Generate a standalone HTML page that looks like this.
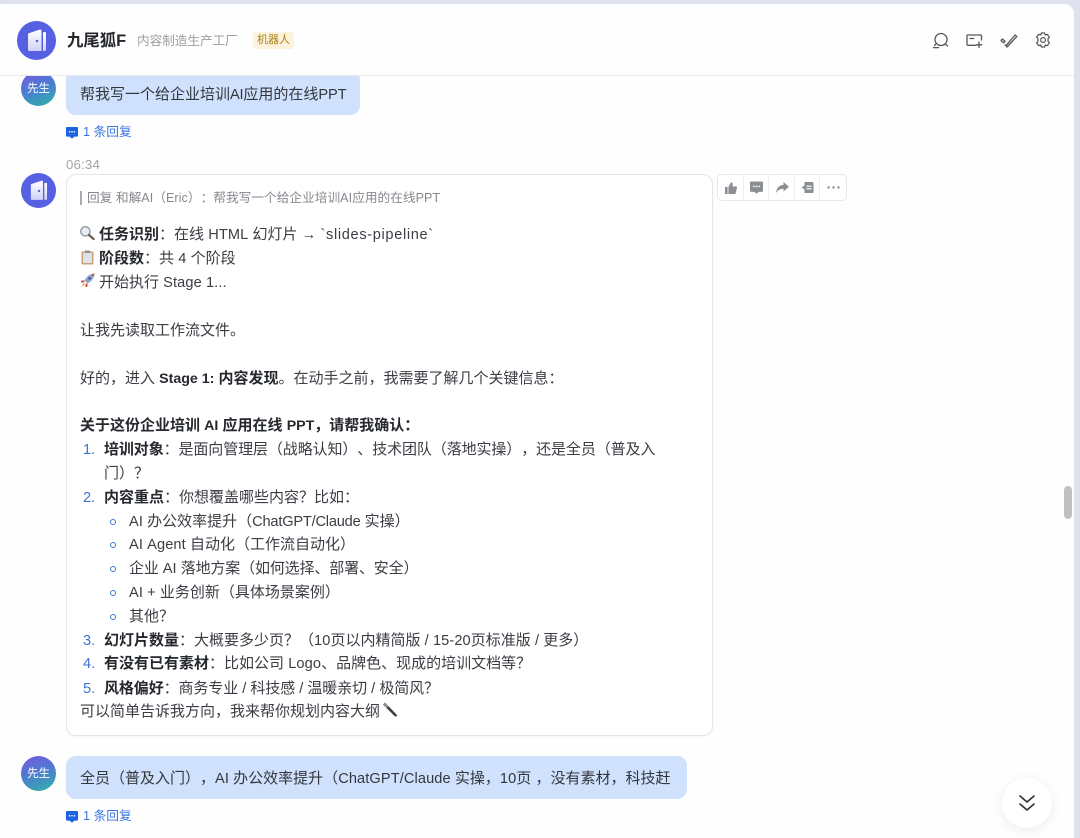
<!DOCTYPE html>
<html lang="zh"><head><meta charset="utf-8"><title>九尾狐F</title>
<style>
*{box-sizing:border-box}
html,body{margin:0;padding:0;width:1080px;height:838px;overflow:hidden;background:#fff}
body{position:relative;font-family:"Liberation Sans","Noto Sans CJK SC",sans-serif;font-size:15px;color:#2b2f36;text-spacing-trim:space-all;font-kerning:none}
em{font-style:normal;font-size:14.6px;letter-spacing:.1px}
.a{position:absolute;white-space:nowrap}
.l{position:absolute;white-space:nowrap;line-height:24px;height:24px;color:#3a3d43}
b{font-weight:700;color:#25282d}
b em{letter-spacing:0;font-size:14.2px}
.n{position:absolute;color:#3f74d6;line-height:24px;left:83px;font-size:14.6px}
.d{position:absolute;left:110px;width:6px;height:6px;border:1.2px solid #3f74d6;border-radius:50%}
.bub{position:absolute;left:66px;background:#cfe1fd;border-radius:10px;line-height:24px;color:#33363c}
.rep{position:absolute;left:83px;color:#3a76e0;font-size:12.7px;line-height:18px;white-space:nowrap}
svg{position:absolute;display:block;overflow:visible}
.av{position:absolute;left:21px;width:35px;height:35px;border-radius:50%;color:#fff;font-size:11.5px;text-align:center;line-height:37px;background:linear-gradient(160deg,#7a55e0 0%,#4a7fd0 50%,#2fb5a5 100%)}
</style></head><body>

<!-- window frame -->
<div class="a" style="left:0;top:0;width:1080px;height:4px;background:#dfe2ee"></div>
<div class="a" style="left:1074px;top:0;width:6px;height:838px;background:#dfe2ee"></div>
<div class="a" style="left:1066px;top:0;width:14px;height:14px;background:#dfe2ee"></div>
<div class="a" style="left:0;top:4px;width:1074px;height:834px;background:#fefefe;border-radius:10px 10px 0 0"></div>

<!-- first bubble -->
<div class="av" style="top:71px;">先生</div>
<div class="bub" style="top:70px;width:294px;height:45px;padding:13px 0 0 14px;white-space:nowrap">帮我写一个给企业培训<em style="letter-spacing:-.2px">AI</em>应用的在线<em style="letter-spacing:-.1px">PPT</em></div>

<!-- header -->
<div class="a" style="left:0;top:4px;width:1074px;height:72px;background:#fefefe;border-bottom:1px solid #e6e7ea;border-radius:10px 10px 0 0"></div>
<svg style="left:17px;top:21px" width="39" height="39" viewBox="0 0 39 39">
<defs><linearGradient id="g1" x1="0" y1="0" x2="0" y2="1"><stop offset="0" stop-color="#fff"/><stop offset="1" stop-color="#cfd3f7"/></linearGradient></defs>
<circle cx="19.5" cy="19.5" r="19.5" fill="#5561e2"/>
<path d="M11 12.5 L23 8.5 Q24.5 8.5 24.5 10 V30 H12.5 Q11 30 11 28.5Z" fill="url(#g1)"/>
<rect x="26" y="11" width="3" height="19" rx="1" fill="url(#g1)"/>
<circle cx="20" cy="20" r="1.3" fill="#5561e2"/>
</svg>
<div class="a" style="left:67px;top:30px;font-size:16.4px;font-weight:700;color:#24272c;line-height:22px">九尾狐F</div>
<div class="a" style="left:137px;top:32px;font-size:12.6px;color:#9a9da3;line-height:18px">内容制造生产工厂</div>
<div class="a" style="left:253px;top:32px;width:41px;height:17px;background:#fdf3dc;border-radius:3px;color:#a8801f;font-size:11px;line-height:17px;text-align:center">机器人</div>

<!-- header icons -->
<svg style="left:932px;top:32px" width="18" height="18" viewBox="0 0 18 18" fill="none" stroke="#55585d" stroke-width="1.3" stroke-linecap="round">
<circle cx="9" cy="7.5" r="6"/><path d="M13.4 12 L15.5 14"/><path d="M1.5 15.6 H6.5"/><path d="M3.6 12 L2.6 13.6"/></svg>
<svg style="left:966px;top:34px" width="18" height="14" viewBox="0 0 18 14" fill="none" stroke="#55585d" stroke-width="1.3" stroke-linecap="round">
<path d="M10 11.3 H2 Q1 11.3 1 10.3 V2 Q1 1 2 1 H14.5 Q15.5 1 15.5 2 V6"/><path d="M4 4.5 H7.5"/><path d="M13 8 V13.5 M10.2 10.8 H15.8"/></svg>
<svg style="left:1000px;top:33px" width="18" height="15" viewBox="0 0 18 15" fill="none" stroke="#55585d" stroke-width="1.3" stroke-linejoin="round">
<path d="M1 7.5 L2.5 6 L5 8.3 L3.7 9.8Z"/><path d="M6 12.7 L15 2 L16.8 3.5 L7 14 L4.8 11.6"/></svg>
<svg style="left:1035px;top:32px" width="16" height="16" viewBox="0 0 16 16" fill="none" stroke="#55585d" stroke-width="1.2" stroke-linejoin="round">
<path d="M6.3 1 H9.7 L10.2 3 L12.2 2.3 L14.4 5.2 L13 6.7 V9.3 L14.4 10.8 L12.2 13.7 L10.2 13 L9.7 15 H6.3 L5.8 13 L3.8 13.7 L1.6 10.8 L3 9.3 V6.7 L1.6 5.2 L3.8 2.3 L5.8 3Z"/><circle cx="8" cy="8" r="2.4"/></svg>

<!-- reply 1 -->
<svg style="left:66px;top:127px" width="12" height="12" viewBox="0 0 12 12"><path d="M1 0H11Q12 0 12 1V8.6Q12 9.6 11 9.6H8.4L6 11.8L3.6 9.6H1Q0 9.6 0 8.6V1Q0 0 1 0Z" fill="#1f62e0"/><circle cx="3.6" cy="4.8" r=".8" fill="#fff"/><circle cx="6" cy="4.8" r=".8" fill="#fff"/><circle cx="8.4" cy="4.8" r=".8" fill="#fff"/></svg>
<div class="rep" style="top:123px">1 条回复</div>

<div class="a" style="left:66px;top:157px;font-size:13.2px;color:#a0a3a8;line-height:16px;letter-spacing:.2px">06:34</div>

<svg style="left:21px;top:173px" width="35" height="35" viewBox="0 0 39 39">
<defs><linearGradient id="g2" x1="0" y1="0" x2="0" y2="1"><stop offset="0" stop-color="#fff"/><stop offset="1" stop-color="#cfd3f7"/></linearGradient></defs>
<circle cx="19.5" cy="19.5" r="19.5" fill="#5561e2"/>
<path d="M11 12.5 L23 8.5 Q24.5 8.5 24.5 10 V30 H12.5 Q11 30 11 28.5Z" fill="url(#g2)"/>
<rect x="26" y="11" width="3" height="19" rx="1" fill="url(#g2)"/>
<circle cx="20" cy="20" r="1.3" fill="#5561e2"/>
</svg>

<!-- card -->
<div class="a" style="left:66px;top:174px;width:647px;height:562px;background:#fff;border:1px solid #e4e5e8;border-radius:10px;box-shadow:0 1px 2px rgba(0,0,0,.04)"></div>
<div class="a" style="left:80px;top:191px;width:1.5px;height:14px;background:#a8abb0"></div>
<div class="a" style="left:87px;top:190px;font-size:12.7px;line-height:17px;color:#85888e">回复 和解<em style="font-size:12.5px">AI</em>（<em style="font-size:12.5px">Eric</em>）：帮我写一个给企业培训<em style="font-size:12.5px">AI</em>应用的在线<em style="font-size:12.5px">PPT</em></div>

<svg style="left:80px;top:226px" width="15" height="14" viewBox="0 0 15 14"><circle cx="5.4" cy="5.4" r="4.6" fill="#e6edf3" stroke="#9aa0a8" stroke-width="1.5"/><path d="M9 9 L13.6 13" stroke="#6d6258" stroke-width="2.4" stroke-linecap="round"/></svg>
<div class="l" style="left:99px;top:223px"><b>任务识别</b>：在线 <em>HTML</em> 幻灯片 <em>→</em> <em style="letter-spacing:.65px">`slides-pipeline`</em></div>
<svg style="left:81px;top:250px" width="13" height="15" viewBox="0 0 13 15"><rect x=".5" y="1.5" width="12" height="13" rx="1" fill="#c9a27c"/><rect x="2" y="3" width="9" height="10" fill="#dfe3e8"/><rect x="4" y=".5" width="5" height="2.5" fill="#8d9299"/></svg>
<div class="l" style="left:99px;top:247px"><b>阶段数</b>：共 <em>4</em> 个阶段</div>
<svg style="left:80px;top:273px" width="15" height="15" viewBox="0 0 15 15"><path d="M14.5 .5 C10 .8 6.5 3.5 4.5 7.5 L7.5 10.5 C11.5 8.5 14.2 5 14.5 .5Z" fill="#8ea3c9"/><path d="M11.5 1.2 L14.5 .5 L13.8 3.5Z" fill="#d8453a"/><path d="M4.5 7.5 L1.5 7.5 L.8 9.5 L4.2 9.5Z M7.5 10.5 L7.5 13.5 L5.5 14.2 L5.5 10.8Z" fill="#d8453a"/><path d="M3.8 10 L5 11.2 L1 14.2Z" fill="#f0a030"/><circle cx="9.6" cy="5.4" r="1.3" fill="#3a5a9a"/></svg>
<div class="l" style="left:99px;top:271px">开始执行 <em>Stage 1...</em></div>
<div class="l" style="left:80px;top:319px">让我先读取工作流文件。</div>
<div class="l" style="left:80px;top:367px">好的，进入 <b><em>Stage 1:</em> 内容发现</b>。在动手之前，我需要了解几个关键信息：</div>
<div class="l" style="left:80px;top:414px"><b>关于这份企业培训 <em>AI</em> 应用在线 <em>PPT</em>，请帮我确认：</b></div>

<div class="n" style="top:438px">1.</div>
<div class="l" style="left:104px;top:438px;letter-spacing:-.1px"><b>培训对象</b>：是面向管理层（战略认知）、技术团队（落地实操），还是全员（普及入</div>
<div class="l" style="left:104px;top:462px">门）？</div>
<div class="n" style="top:486px">2.</div>
<div class="l" style="left:104px;top:486px"><b>内容重点</b>：你想覆盖哪些内容？比如：</div>
<div class="d" style="top:519px"></div><div class="l" style="left:129px;top:510px"><em>AI</em> 办公效率提升（<em style="letter-spacing:-.2px">ChatGPT/Claude</em> 实操）</div>
<div class="d" style="top:542px"></div><div class="l" style="left:129px;top:533px"><em>AI Agent</em> 自动化（工作流自动化）</div>
<div class="d" style="top:566px"></div><div class="l" style="left:129px;top:557px;letter-spacing:-.15px">企业 <em>AI</em> 落地方案（如何选择、部署、安全）</div>
<div class="d" style="top:590px"></div><div class="l" style="left:129px;top:581px"><em>AI +</em> 业务创新（具体场景案例）</div>
<div class="d" style="top:614px"></div><div class="l" style="left:129px;top:605px">其他？</div>
<div class="n" style="top:629px">3.</div>
<div class="l" style="left:104px;top:629px"><b>幻灯片数量</b>：大概要多少页？（<em>10</em>页以内精简版 <em>/ 15-20</em>页标准版 <em>/</em> 更多）</div>
<div class="n" style="top:652px">4.</div>
<div class="l" style="left:104px;top:652px"><b>有没有已有素材</b>：比如公司 <em>Logo</em>、品牌色、现成的培训文档等？</div>
<div class="n" style="top:677px">5.</div>
<div class="l" style="left:104px;top:677px;letter-spacing:-.1px"><b>风格偏好</b>：商务专业 <em>/</em> 科技感 <em>/</em> 温暖亲切 <em>/</em> 极简风？</div>
<div class="l" style="left:80px;top:700px">可以简单告诉我方向，我来帮你规划内容大纲</div>
<svg style="left:382px;top:702px" width="16" height="16" viewBox="0 0 16 16"><path d="M1 2.5 L3 .5 L15 13 L14.5 14.5 L13 14.5 Z" fill="#3c3f44"/><path d="M1 2.5 L3 .5 L6.5 4.2 L4.5 6.2Z" fill="#8d9096"/></svg>

<!-- actions -->
<div class="a" style="left:717px;top:174px;width:130px;height:27px;background:#fff;border:1px solid #e6e7ea;border-radius:5px"></div>
<div class="a" style="left:743px;top:175px;width:1px;height:25px;background:#eceded"></div>
<div class="a" style="left:768px;top:175px;width:1px;height:25px;background:#eceded"></div>
<div class="a" style="left:794px;top:175px;width:1px;height:25px;background:#eceded"></div>
<div class="a" style="left:819px;top:175px;width:1px;height:25px;background:#eceded"></div>
<svg style="left:725px;top:182px" width="12" height="12" viewBox="0 0 12 12" fill="#8b8e93"><rect x="0" y="5" width="2.6" height="7"/><path d="M3.4 5 L6 .2 Q7.6 .2 7.6 2 V4.5 H11 Q12 4.5 12 5.6 L10.8 11 Q10.6 12 9.6 12 H3.4Z"/></svg>
<svg style="left:750px;top:181px" width="13" height="13" viewBox="0 0 12 12"><path d="M1 .5H11Q12 .5 12 1.5V9Q12 10 11 10H8L6 11.8L4 10H1Q0 10 0 9V1.5Q0 .5 1 .5Z" fill="#8b8e93"/><circle cx="3.6" cy="5" r=".8" fill="#fff"/><circle cx="6" cy="5" r=".8" fill="#fff"/><circle cx="8.4" cy="5" r=".8" fill="#fff"/></svg>
<svg style="left:776px;top:182px" width="13" height="11" viewBox="0 0 13 11" fill="#8b8e93"><path d="M7.5 0 L13 4.8 L7.5 9.5 V6.7 C4.5 6.7 2 7.8 0 11 C.5 6.5 3 3.3 7.5 2.9Z"/></svg>
<svg style="left:801px;top:181px" width="13" height="13" viewBox="0 0 13 13"><path d="M3.5 1 H11.5 Q12.5 1 12.5 2 V11 Q12.5 12 11.5 12 H3.5 V8.5 L.5 6.5 L3.5 4.5Z" fill="#8b8e93"/><rect x="5.5" y="4.6" width="5" height="1.2" fill="#fff"/><rect x="5.5" y="7.2" width="5" height="1.2" fill="#fff"/></svg>
<svg style="left:827px;top:186px" width="13" height="3" viewBox="0 0 13 3" fill="#8b8e93"><circle cx="1.5" cy="1.5" r="1.2"/><circle cx="6.5" cy="1.5" r="1.2"/><circle cx="11.5" cy="1.5" r="1.2"/></svg>

<!-- second bubble -->
<div class="av" style="top:756px;">先生</div>
<div class="bub" style="top:756px;width:621px;height:43px;padding:11px 0 0 14px;white-space:nowrap">全员（普及入门），<em>AI</em> 办公效率提升（<em>ChatGPT/Claude</em> 实操，<em>10</em>页 ，没有素材，科技赶</div>
<svg style="left:66px;top:811px" width="12" height="12" viewBox="0 0 12 12"><path d="M1 0H11Q12 0 12 1V8.6Q12 9.6 11 9.6H8.4L6 11.8L3.6 9.6H1Q0 9.6 0 8.6V1Q0 0 1 0Z" fill="#1f62e0"/><circle cx="3.6" cy="4.8" r=".8" fill="#fff"/><circle cx="6" cy="4.8" r=".8" fill="#fff"/><circle cx="8.4" cy="4.8" r=".8" fill="#fff"/></svg>
<div class="rep" style="top:807px">1 条回复</div>

<!-- scrollbar -->
<div class="a" style="left:1064px;top:486px;width:8px;height:33px;background:#bfc0c2;border-radius:4px"></div>

<!-- scroll-down button -->
<div class="a" style="left:1002px;top:778px;width:50px;height:50px;background:#fff;border-radius:50%;box-shadow:0 2px 12px rgba(0,0,0,.08)"></div>
<svg style="left:1019px;top:795px" width="16" height="17" viewBox="0 0 16 17" fill="none" stroke="#33363b" stroke-width="1.7" stroke-linecap="round" stroke-linejoin="round"><path d="M1 1 L8 7 L15 1"/><path d="M1 9 L8 15 L15 9"/></svg>
</body></html>
